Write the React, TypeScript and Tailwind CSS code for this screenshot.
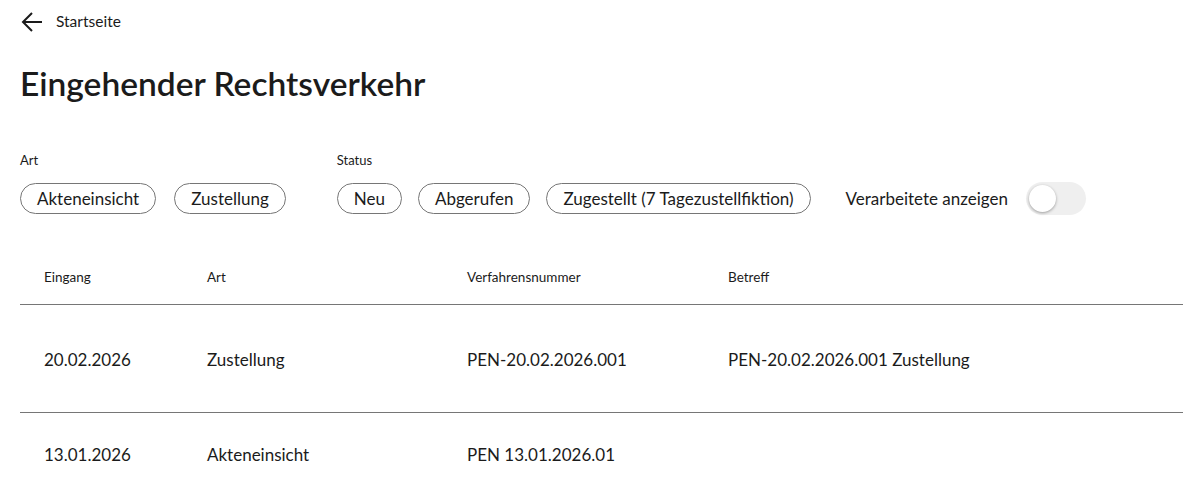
import React from "react";

const rows = [
  { eingang: "20.02.2026", art: "Zustellung", nummer: "PEN-20.02.2026.001", betreff: "PEN-20.02.2026.001 Zustellung", h: "h-[108px] pt-[3px]" },
  { eingang: "13.01.2026", art: "Akteneinsicht", nummer: "PEN 13.01.2026.01", betreff: "", h: "h-[84px]" },
];

function Chip({ children }: { children: React.ReactNode }) {
  return (
    <button className="h-[31px] rounded-full border border-[#767676] bg-white px-4 text-[17px] leading-none text-[#1b1b1b]">
      {children}
    </button>
  );
}

export default function App() {
  return (
    <div className="min-h-screen bg-white font-['Lato','Noto_Sans',sans-serif] text-[#1b1b1b]">
      {/* Zurück */}
      <div className="flex h-[44px] items-center gap-[13px] pl-[21px]">
        <svg width="22" height="22" viewBox="0 0 22 22" fill="none" stroke="#1b1b1b" strokeWidth="2">
          <path d="M21 11H2M11 2l-9 9 9 9" />
        </svg>
        <span className="text-[15.5px]">Startseite</span>
      </div>

      <h1 className="mt-[19px] pl-5 text-[33.5px] leading-[40px] font-semibold">Eingehender Rechtsverkehr</h1>

      {/* Filter */}
      <div className="mt-[49px] flex items-end pl-5">
        <div className="flex flex-col gap-[15px]">
          <span className="text-[13px] leading-4">Art</span>
          <div className="flex gap-[18px]">
            <Chip>Akteneinsicht</Chip>
            <Chip>Zustellung</Chip>
          </div>
        </div>
        <div className="ml-[51px] flex flex-col gap-[15px]">
          <span className="text-[13px] leading-4">Status</span>
          <div className="flex gap-4">
            <Chip>Neu</Chip>
            <Chip>Abgerufen</Chip>
            <Chip>Zugestellt (7 Tagezustellfiktion)</Chip>
          </div>
        </div>
        <div className="ml-[35px] flex h-[31px] items-center gap-[18px]">
          <span className="text-[17px]">Verarbeitete anzeigen</span>
          <div className="flex h-[33px] w-[60px] items-center rounded-full bg-[#efefef] px-[3px]">
            <div className="h-[27px] w-[27px] rounded-full bg-white shadow-[0_1px_3px_rgba(0,0,0,0.35)]" />
          </div>
        </div>
      </div>

      {/* Tabelle */}
      <div className="mt-[36px] ml-5">
        <div className="grid h-[55px] grid-cols-[163px_260px_261px_1fr] items-center border-b border-[#767676] text-[13.5px]">
          <div className="px-6">Eingang</div>
          <div className="px-6">Art</div>
          <div className="px-6">Verfahrensnummer</div>
          <div className="px-6">Betreff</div>
        </div>
        {rows.map((r, i) => (
          <div
            key={i}
            className={`grid ${r.h} grid-cols-[163px_260px_261px_1fr] items-center text-[17px] ${i === 0 ? "border-b border-[#767676]" : ""}`}
          >
            <div className="px-6">{r.eingang}</div>
            <div className="px-6">{r.art}</div>
            <div className="px-6">{r.nummer}</div>
            <div className="px-6">{r.betreff}</div>
          </div>
        ))}
      </div>
    </div>
  );
}
